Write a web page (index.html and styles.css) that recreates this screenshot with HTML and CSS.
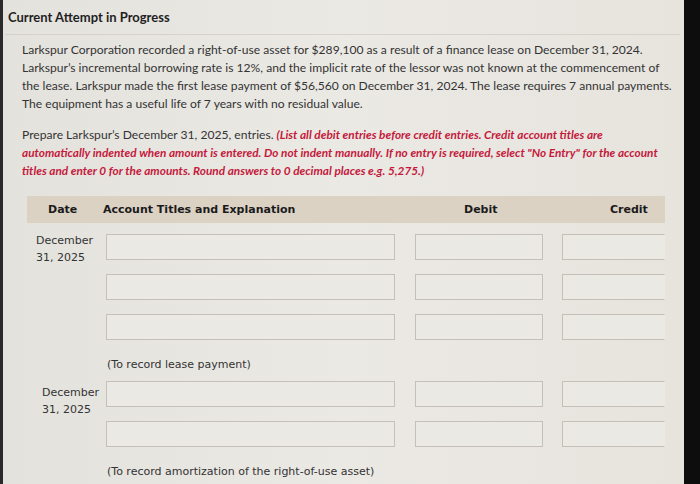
FILE: index.html
```html
<!DOCTYPE html>
<html>
<head>
<meta charset="utf-8">
<link rel="stylesheet" href="styles.css">
</head>
<body>
<div class="frame">
  <div class="bezel-left"></div>
  <main class="screen">
    <h1 class="title">Current Attempt in Progress</h1>
    <div class="rule"></div>
    <p class="problem">Larkspur Corporation recorded a right-of-use asset for $289,100 as a result of a finance lease on December 31, 2024.<br>Larkspur’s incremental borrowing rate is 12%, and the implicit rate of the lessor was not known at the commencement of<br>the lease. Larkspur made the first lease payment of $56,560 on December 31, 2024. The lease requires 7 annual payments.<br>The equipment has a useful life of 7 years with no residual value.</p>
    <p class="prompt">Prepare Larkspur’s December 31, 2025, entries. <span class="note">(List all debit entries before credit entries. Credit account titles are<br>automatically indented when amount is entered. Do not indent manually. If no entry is required, select "No Entry" for the account<br>titles and enter 0 for the amounts. Round answers to 0 decimal places e.g. 5,275.)</span></p>

    <section class="journal">
      <div class="jhead">
        <div class="h-date">Date</div>
        <div class="h-acct">Account Titles and Explanation</div>
        <div class="h-debit">Debit</div>
        <div class="h-credit">Credit</div>
      </div>

      <div class="entry first">
        <div class="date">December<br>31, 2025</div>
        <div class="lines">
          <div class="line"><div class="box acct"></div><div class="box debit"></div><div class="box credit"></div></div>
          <div class="line"><div class="box acct"></div><div class="box debit"></div><div class="box credit"></div></div>
          <div class="line"><div class="box acct"></div><div class="box debit"></div><div class="box credit"></div></div>
          <div class="explain">(To record lease payment)</div>
        </div>
      </div>

      <div class="entry second">
        <div class="date">December<br>31, 2025</div>
        <div class="lines">
          <div class="line"><div class="box acct"></div><div class="box debit"></div><div class="box credit"></div></div>
          <div class="line"><div class="box acct"></div><div class="box debit"></div><div class="box credit"></div></div>
          <div class="explain">(To record amortization of the right-of-use asset)</div>
        </div>
      </div>
    </section>
  </main>
  <div class="bezel-right"></div>
</div>
</body>
</html>
```
FILE: styles.css
```css
html, body {
  margin: 0;
  padding: 0;
  width: 700px;
  height: 484px;
  overflow: hidden;
  background: #111;
}
.frame {
  display: flex;
  height: 484px;
}
.bezel-left {
  width: 3px;
  background: #2a2a2a;
}
.bezel-right {
  width: 16px;
  background: #0d0d0d;
}
.screen {
  flex: 1;
  background: linear-gradient(90deg, #e4e2dd 0%, #ebe9e4 50%, #e7e4de 100%);
  font-family: Lato, "Open Sans", sans-serif;
  color: #2b2b2b;
  overflow: hidden;
}
.title {
  margin: 0;
  padding: 9px 0 0 5px;
  font-size: 13px;
  font-weight: 700;
  line-height: 17px;
  color: #1f1f1f;
}
.rule {
  height: 1px;
  background: #d6d2cb;
  margin: 8px 4px 0 2px;
}
.problem {
  margin: 6px 0 0 19px;
  font-size: 12.1px;
  line-height: 18px;
  white-space: nowrap;
  color: #333;
}
.prompt {
  margin: 13px 0 0 19px;
  font-size: 12.1px;
  line-height: 18px;
  white-space: nowrap;
  color: #333;
}
.note {
  color: #c41a3c;
  font-style: italic;
  font-weight: 700;
  font-size: 11.8px;
  line-height: 18px;
  vertical-align: top;
}
.journal {
  margin: 16px 19px 0 24px;
  font-family: "DejaVu Sans", Verdana, sans-serif;
  font-size: 11px;
  color: #333;
}
.jhead {
  display: grid;
  grid-template-columns: 76px 314px 146px 1fr;
  align-items: center;
  height: 27px;
  background: #dbd2c4;
  font-weight: 700;
  color: #1b1b1b;
}
.h-date { padding-left: 21px; }
.h-debit { padding-left: 47px; }
.h-credit { padding-left: 47px; }
.entry {
  display: flex;
}
.entry.first {
  margin-top: 11px;
}
.entry.second {
  margin-top: 8px;
}
.date {
  width: 85px;
  padding: 0 0 0 9px;
  box-sizing: border-box;
  line-height: 17px;
  color: #333;
}
.entry.first .date { margin-top: -2px; }
.entry.second .date { padding-left: 15px; padding-top: 3px; }
.lines {
  flex: 1;
  display: flex;
  flex-direction: column;
  gap: 14px;
}
.line {
  display: flex;
  height: 26px;
}
.box {
  border: 1px solid #c4c0b8;
  background: #ebe9e4;
  box-sizing: border-box;
  height: 26px;
}
.acct { width: 289px; }
.debit { width: 128px; margin-left: 20px; }
.credit { width: 103px; margin-left: 19px; border-right-color: transparent; }
.explain {
  padding: 3px 0 0 1px;
  line-height: 16px;
  color: #333;
}
.entry.second .lines { padding-left: 4px; }
```
